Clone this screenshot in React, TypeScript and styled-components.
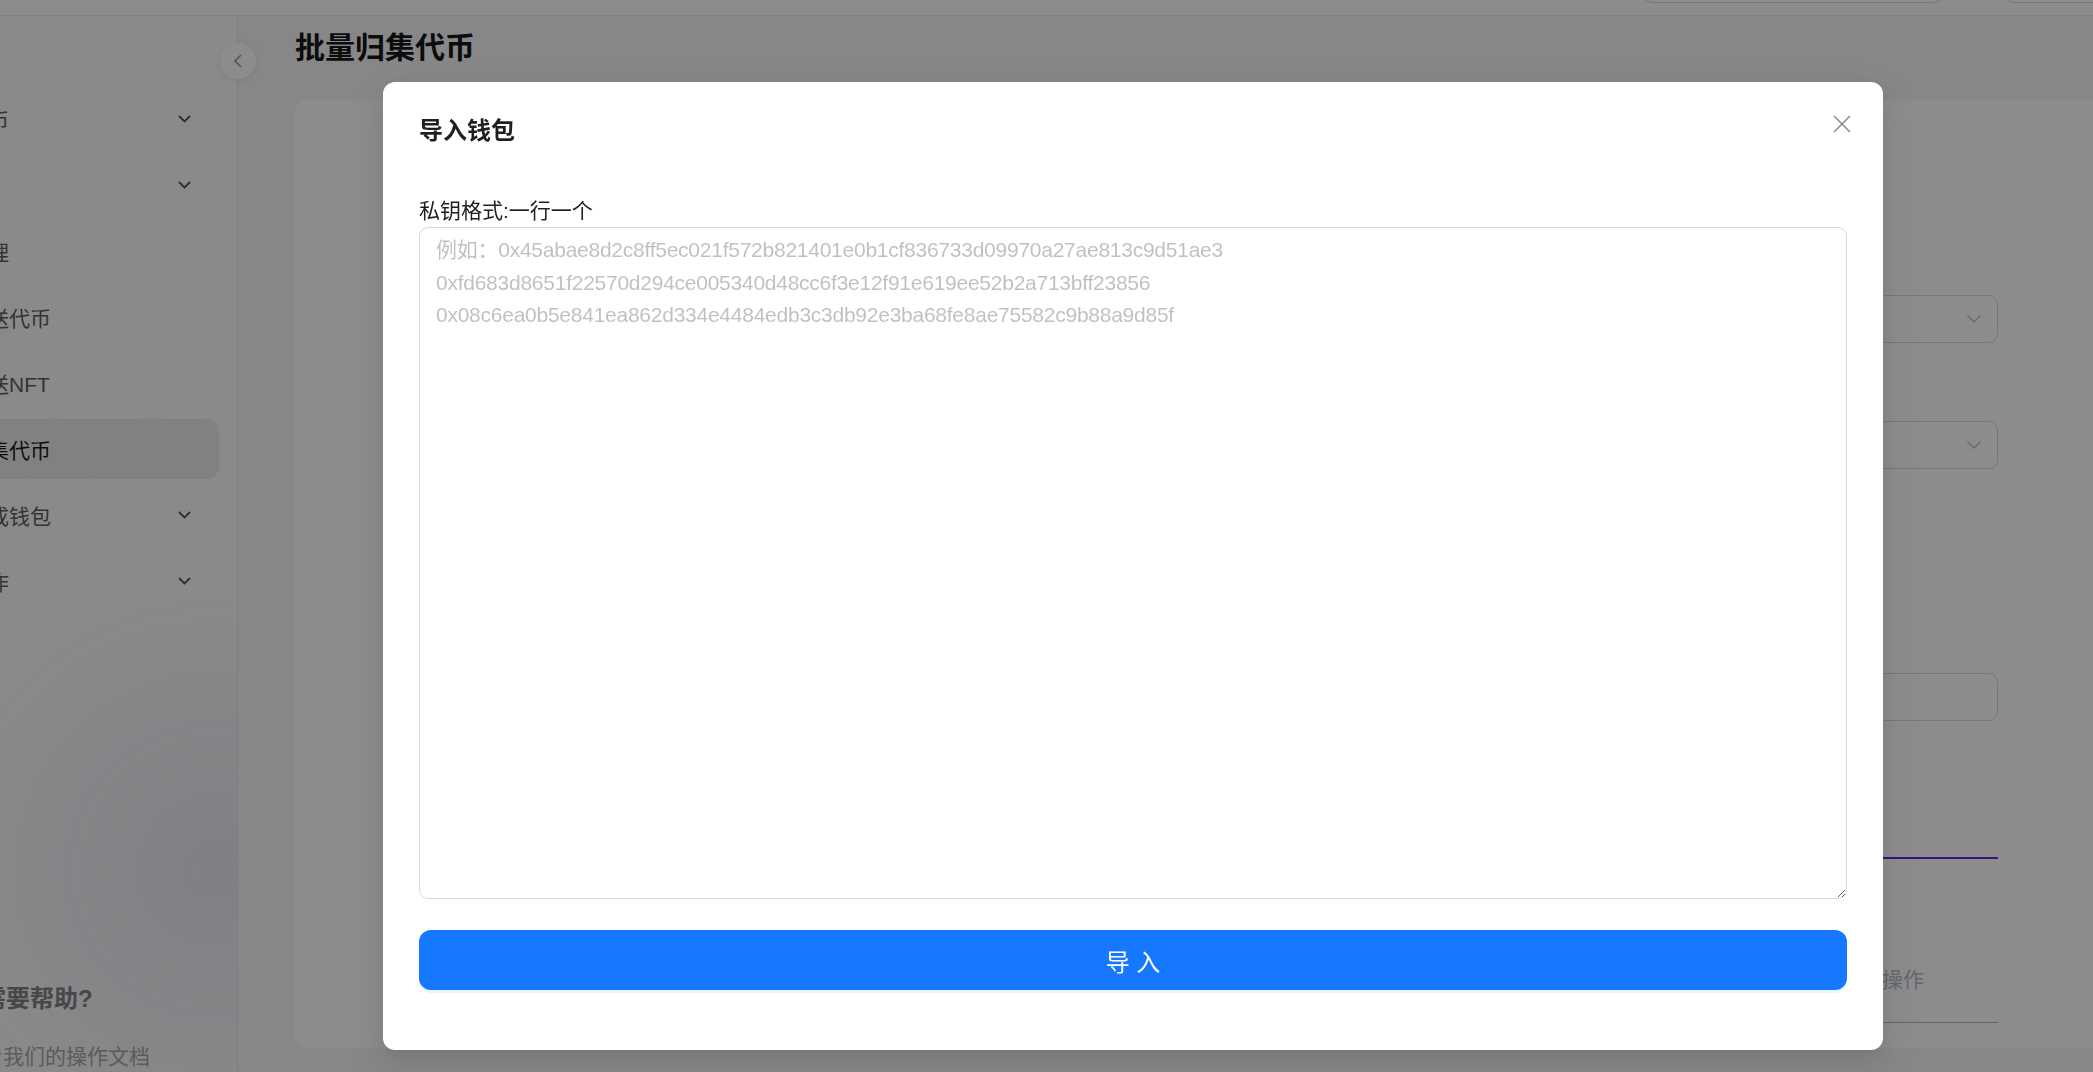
import styled, { createGlobalStyle } from 'styled-components';

const GlobalStyle = createGlobalStyle`
  html, body {
    margin: 0;
    padding: 0;
    overflow: hidden;
    font-family: "Liberation Sans", "Noto Sans CJK SC", sans-serif;
    color: rgba(0, 0, 0, 0.88);
  }
  * {
    box-sizing: border-box;
  }
`;

const Viewport = styled.div`
  width: 100vw;
  height: 100vh;
  overflow: hidden;
  background: #f5f6f8;
`;

// the page is scrolled a little to the right and down
const Page = styled.div`
  width: 2400px;
  margin: -81px 0 0 -129px;
`;

const Header = styled.header`
  height: 97px;
  background: #fff;
  border-bottom: 1px solid #e9ebef;
  display: flex;
  justify-content: flex-end;
  gap: 52px;
  padding: 24px 151px 0 0;
`;

const HeaderButton = styled.button<{ $width: number }>`
  width: ${({ $width }) => $width}px;
  height: 60px;
  border: 1.5px solid #d9d9d9;
  border-radius: 15px;
  background: #fff;
  font-family: inherit;
  font-size: 21px;
  color: rgba(0, 0, 0, 0.88);
`;

const Body = styled.div`
  display: flex;
  min-height: 1080px;
`;

const Sidebar = styled.aside`
  position: relative;
  width: 367px;
  flex-shrink: 0;
  border-right: 1px solid #e6e8ec;
  padding: 73px 12px 0;
  display: flex;
  flex-direction: column;
  background:
    radial-gradient(circle at 343px 854px, rgba(120, 140, 175, 0.16), transparent 300px),
    repeating-radial-gradient(circle at 343px 854px, rgba(120, 140, 175, 0.05) 0 1px, transparent 1px 24px),
    #fcfcfd;
`;

const CollapseButton = styled.button`
  position: absolute;
  top: 27px;
  right: -19px;
  width: 36px;
  height: 36px;
  border-radius: 50%;
  border: none;
  background: #fff;
  box-shadow: 0 2px 8px rgba(0, 0, 0, 0.07);
  display: flex;
  align-items: center;
  justify-content: center;
  padding: 0;
  z-index: 2;
`;

const MenuList = styled.nav`
  display: flex;
  flex-direction: column;
  gap: 6px;
`;

const MenuItem = styled.div<{ $active?: boolean }>`
  height: 60px;
  margin: 0 6px;
  padding: 0 28px 0 36px;
  border-radius: 12px;
  display: flex;
  align-items: center;
  justify-content: space-between;
  font-size: 21px;
  white-space: nowrap;
  color: ${({ $active }) => ($active ? '#1a1a1a' : '#5e5e5e')};
  background: ${({ $active }) => ($active ? '#ececed' : 'transparent')};
`;

const HelpBlock = styled.div`
  margin-top: auto;
  padding: 0 0 23px 78px;
`;

const HelpTitle = styled.div`
  display: flex;
  align-items: center;
  gap: 3px;
  font-size: 24px;
  font-weight: 700;
  line-height: 36px;
  color: #828282;
  margin-bottom: 23px;
`;

const HelpText = styled.div`
  font-size: 21px;
  line-height: 33px;
  color: #a6a6a6;
`;

const Content = styled.main`
  flex: 1;
  padding: 9px 57px 0;
`;

const PageTitle = styled.h1`
  margin: 0 0 29px;
  font-size: 30px;
  font-weight: 700;
  line-height: 46px;
  color: #161616;
`;

const Card = styled.section`
  background: #fff;
  border-radius: 12px;
  padding: 150px 36px 25px;
`;

const Form = styled.div`
  max-width: 1487px;
  margin: 0 auto;
`;

const FormItem = styled.div`
  margin-bottom: 33px;
`;

const FormLabel = styled.div`
  font-size: 21px;
  line-height: 33px;
  padding-bottom: 12px;
  color: rgba(0, 0, 0, 0.88);
`;

const SelectBox = styled.div`
  height: 48px;
  border: 1px solid #d9d9d9;
  border-radius: 9px;
  padding: 0 16px 0 17px;
  display: flex;
  align-items: center;
  justify-content: space-between;
  font-size: 21px;
  color: rgba(0, 0, 0, 0.25);
`;

const TextInput = styled.div`
  height: 48px;
  border: 1px solid #d9d9d9;
  border-radius: 9px;
  padding: 0 17px;
  display: flex;
  align-items: center;
  font-size: 21px;
  color: rgba(0, 0, 0, 0.25);
`;

const RadioRow = styled.div`
  height: 48px;
  display: flex;
  align-items: center;
  gap: 36px;
  font-size: 21px;
`;

const SectionBar = styled.div`
  height: 105px;
  border-bottom: 2px solid #6a1fe0;
  display: flex;
  align-items: center;
  font-size: 21px;
`;

const TableHead = styled.div`
  margin-top: 74px;
  height: 90px;
  border-bottom: 1px solid #b0b9ca;
  display: grid;
  grid-template-columns: 120px 1fr 260px 260px 140px;
  align-items: center;
`;

const HeadCell = styled.div`
  padding: 0 24px;
  font-size: 21px;
  color: #b3bbca;
`;

const Overlay = styled.div`
  position: fixed;
  inset: 0;
  background: rgba(0, 0, 0, 0.45);
  z-index: 1000;
`;

const ModalWrap = styled.div`
  position: fixed;
  inset: 0;
  z-index: 1001;
`;

const Modal = styled.div`
  position: relative;
  width: 1500px;
  margin: 82px 0 0 383px;
  padding: 31px 36px 60px;
  background: #fff;
  border-radius: 12px;
  box-shadow:
    0 9px 24px 0 rgba(0, 0, 0, 0.08),
    0 4px 9px -6px rgba(0, 0, 0, 0.12),
    0 13px 42px 12px rgba(0, 0, 0, 0.05);
`;

const ModalTitle = styled.div`
  font-size: 24px;
  font-weight: 600;
  line-height: 36px;
  color: rgba(0, 0, 0, 0.88);
  margin-bottom: 45px;
`;

const CloseButton = styled.button`
  position: absolute;
  top: 25px;
  right: 25px;
  width: 33px;
  height: 33px;
  padding: 0;
  border: none;
  background: transparent;
  display: flex;
  align-items: center;
  justify-content: center;
`;

const FieldLabel = styled.label`
  display: block;
  font-size: 21px;
  line-height: 33px;
  color: rgba(0, 0, 0, 0.88);
`;

const KeyTextarea = styled.textarea`
  display: block;
  width: 100%;
  height: 672px;
  margin: 0;
  border: 1px solid #d9d9d9;
  border-radius: 9px;
  padding: 6px 16px;
  font-family: inherit;
  font-size: 21px;
  line-height: 32.5px;
  letter-spacing: -0.25px;
  color: rgba(0, 0, 0, 0.88);
  resize: vertical;
  outline: none;

  &::placeholder {
    color: rgba(0, 0, 0, 0.25);
  }
`;

const SubmitButton = styled.button`
  display: block;
  width: 100%;
  height: 60px;
  margin-top: 31px;
  border: none;
  border-radius: 12px;
  background: #1677ff;
  color: #fff;
  font-family: inherit;
  font-size: 24px;
  box-shadow: 0 3px 0 rgba(5, 145, 255, 0.1);
`;

const ChevronDown = ({ color = '#555' }: { color?: string }) => (
  <svg width="13" height="8" viewBox="0 0 13 8" fill="none">
    <polyline points="1,1 6.5,6.5 12,1" stroke={color} strokeWidth="1.8" />
  </svg>
);

const SelectArrow = () => (
  <svg width="14" height="8" viewBox="0 0 14 8" fill="none">
    <polyline points="0.5,0.5 7,7 13.5,0.5" stroke="rgba(0,0,0,0.25)" strokeWidth="1.4" />
  </svg>
);

const menuItems = [
  { label: '创建代币', sub: true },
  { label: '工具', sub: true },
  { label: '钱包管理' },
  { label: '批量发送代币' },
  { label: '批量发送NFT' },
  { label: '批量归集代币', active: true },
  { label: '批量生成钱包', sub: true },
  { label: '其他操作', sub: true },
];

const placeholder = [
  '例如：0x45abae8d2c8ff5ec021f572b821401e0b1cf836733d09970a27ae813c9d51ae3',
  '0xfd683d8651f22570d294ce005340d48cc6f3e12f91e619ee52b2a713bff23856',
  '0x08c6ea0b5e841ea862d334e4484edb3c3db92e3ba68fe8ae75582c9b88a9d85f',
].join('\n');

const App = () => {
  return (
    <Viewport>
      <GlobalStyle />
      <Page>
        <Header>
          <HeaderButton $width={310}>连接钱包</HeaderButton>
          <HeaderButton $width={120}>中文</HeaderButton>
        </Header>
        <Body>
          <Sidebar>
            <CollapseButton>
              <svg width="8" height="14" viewBox="0 0 8 14" fill="none">
                <polyline points="7,1 1,7 7,13" stroke="#9a9a9a" strokeWidth="1.6" />
              </svg>
            </CollapseButton>
            <MenuList>
              {menuItems.map((item) => (
                <MenuItem key={item.label} $active={item.active}>
                  <span>{item.label}</span>
                  {item.sub && <ChevronDown />}
                </MenuItem>
              ))}
            </MenuList>
            <HelpBlock>
              <HelpTitle>
                <svg width="18" height="18" viewBox="0 0 18 18" fill="none">
                  <circle cx="9" cy="9" r="8" stroke="#828282" strokeWidth="1.5" />
                </svg>
                需要帮助?
              </HelpTitle>
              <HelpText>查看我们的操作文档</HelpText>
            </HelpBlock>
          </Sidebar>
          <Content>
            <PageTitle>批量归集代币</PageTitle>
            <Card>
              <Form>
                <FormItem>
                  <FormLabel>选择网络</FormLabel>
                  <SelectBox>
                    <span>请选择网络</span>
                    <SelectArrow />
                  </SelectBox>
                </FormItem>
                <FormItem>
                  <FormLabel>选择代币</FormLabel>
                  <SelectBox>
                    <span>请选择代币</span>
                    <SelectArrow />
                  </SelectBox>
                </FormItem>
                <FormItem>
                  <FormLabel>归集方式</FormLabel>
                  <RadioRow>
                    <span>全部余额</span>
                    <span>指定数量</span>
                  </RadioRow>
                </FormItem>
                <FormItem>
                  <FormLabel>接收地址</FormLabel>
                  <TextInput>请输入接收地址</TextInput>
                </FormItem>
                <SectionBar>钱包列表</SectionBar>
                <TableHead>
                  <HeadCell>序号</HeadCell>
                  <HeadCell>钱包地址</HeadCell>
                  <HeadCell>主币余额</HeadCell>
                  <HeadCell>代币余额</HeadCell>
                  <HeadCell>操作</HeadCell>
                </TableHead>
              </Form>
            </Card>
          </Content>
        </Body>
      </Page>

      <Overlay />
      <ModalWrap>
        <Modal>
          <ModalTitle>导入钱包</ModalTitle>
          <CloseButton aria-label="关闭">
            <svg width="18" height="18" viewBox="0 0 18 18" fill="none">
              <path d="M1 1L17 17M17 1L1 17" stroke="rgba(0,0,0,0.45)" strokeWidth="1.6" />
            </svg>
          </CloseButton>
          <FieldLabel>私钥格式:一行一个</FieldLabel>
          <KeyTextarea placeholder={placeholder} />
          <SubmitButton>导 入</SubmitButton>
        </Modal>
      </ModalWrap>
    </Viewport>
  );
};

export default App;
